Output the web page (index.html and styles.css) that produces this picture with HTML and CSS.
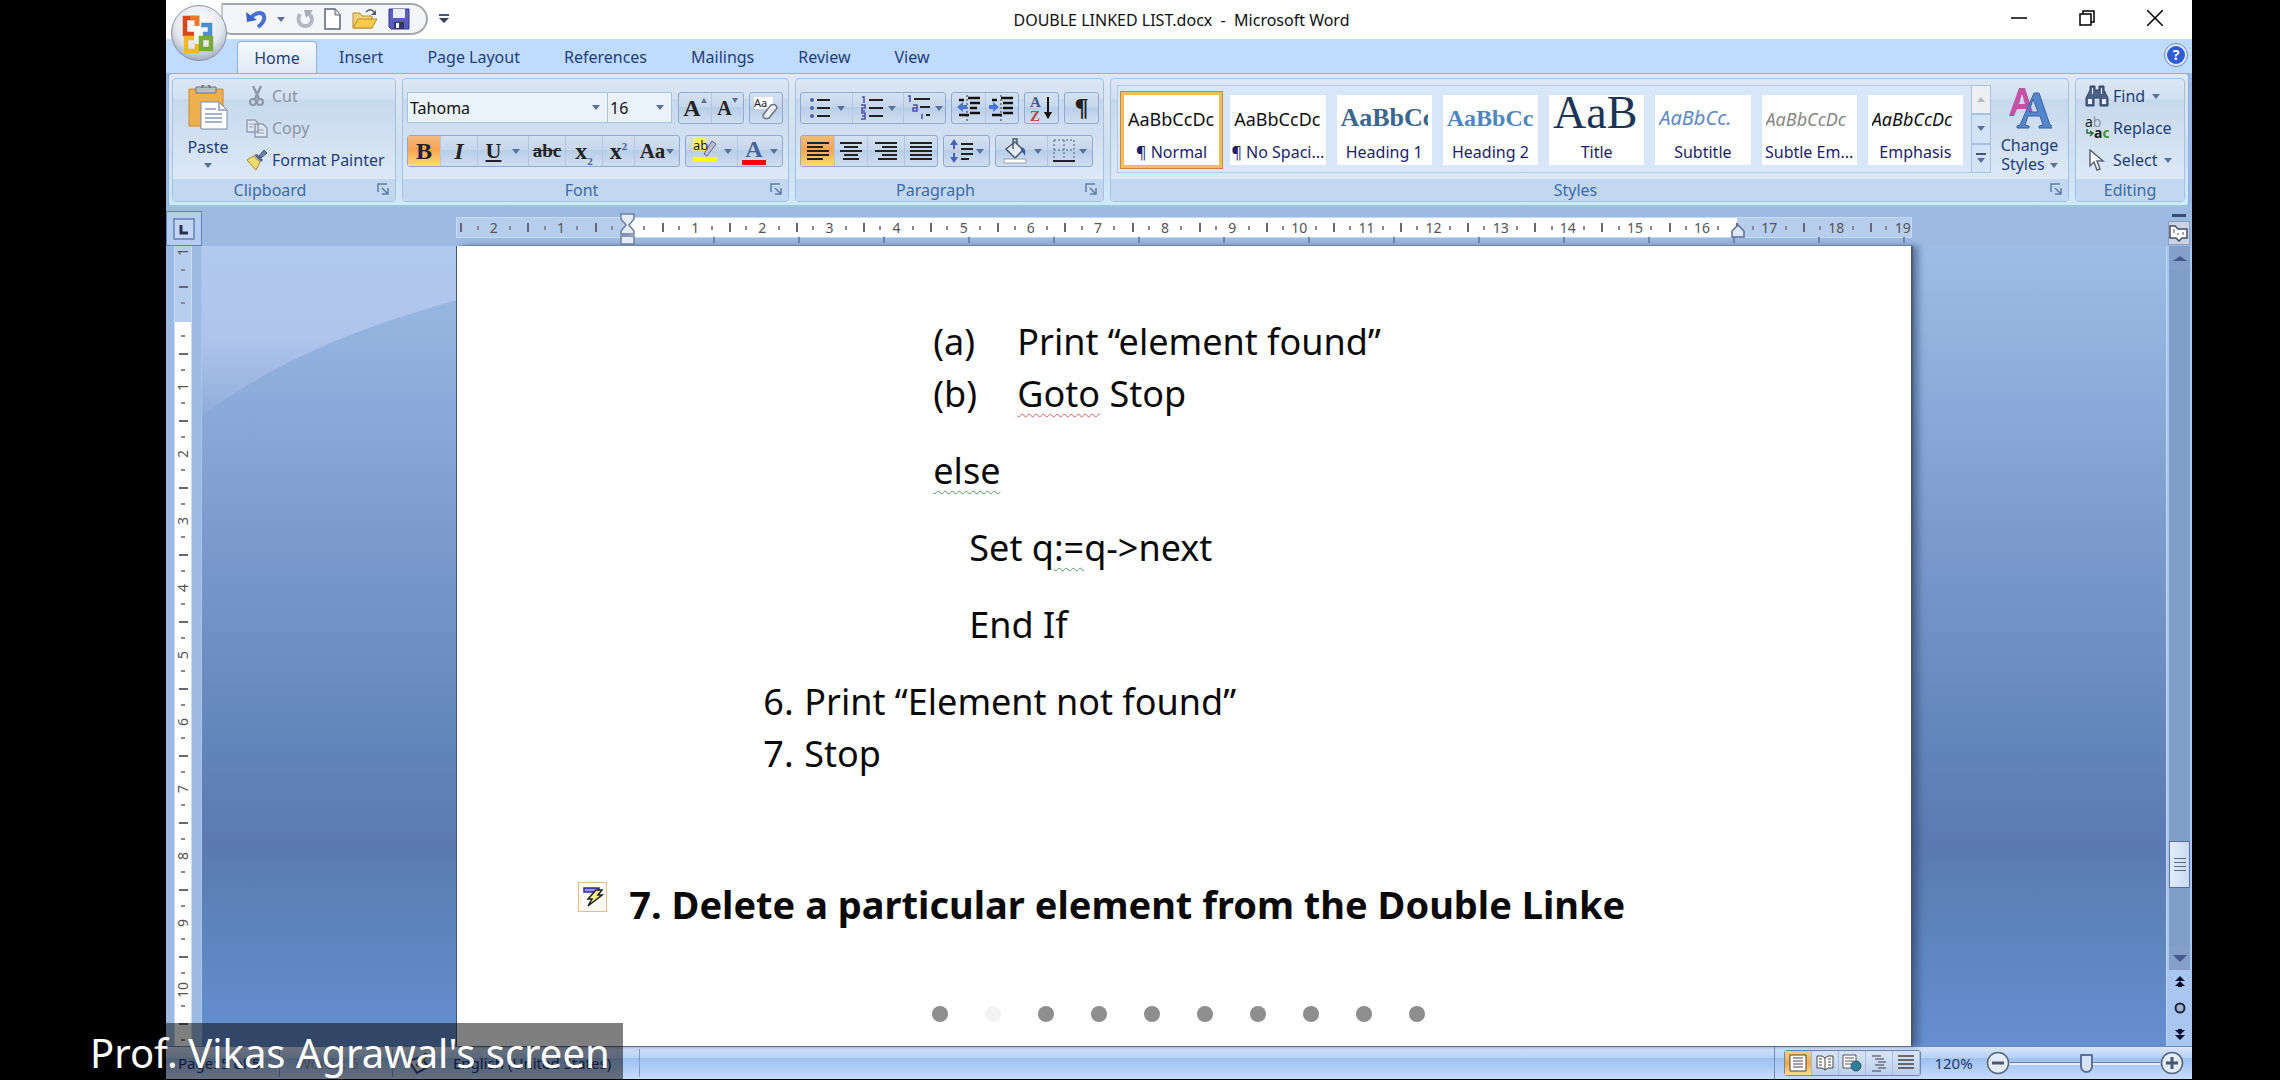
FILE: index.html
```html
<!DOCTYPE html>
<html lang="en">
<head>
<meta charset="utf-8">
<title>DOUBLE LINKED LIST.docx - Microsoft Word</title>
<link rel="stylesheet" href="styles.css">
</head>
<body>
<div class="app">

<header class="titlebar">
  <div class="quick">
    <button aria-label="Undo"><svg width="22" height="20" viewBox="0 0 22 20"><path d="M6 9C9 4 17 2 19 7c1 4-2 8-6 11" fill="none" stroke="#4a6fd0" stroke-width="4"/><path d="M1 3l1 10 10-2z" fill="#3a62c8"/></svg></button>
    <button aria-label="Undo history"><span class="caret"></span></button>
    <button aria-label="Repeat"><svg width="20" height="20" viewBox="0 0 20 20"><path d="M5 5c-3 5-1 12 5 12 7 0 9-8 4-12" fill="none" stroke="#b4b8c0" stroke-width="4"/><path d="M9 1h9l-7 8z" fill="#a9adb6"/></svg></button>
    <button aria-label="New"><svg width="18" height="22" viewBox="0 0 18 22"><path d="M1 1h10l5 6v14H1z" fill="#fff" stroke="#5a6478" stroke-width="1.5"/><path d="M11 1v6h5" fill="#dde3ee" stroke="#5a6478"/></svg></button>
    <button aria-label="Open"><svg width="26" height="22" viewBox="0 0 26 22"><path d="M1 20V5h7l2 3h10v12z" fill="#f4d27a" stroke="#b98a2c"/><path d="M1 20L6 11h19l-5 9z" fill="#fbc94c" stroke="#b98a2c"/><path d="M14 4c3-3 6-3 8 0" fill="none" stroke="#505a6a" stroke-width="1.5"/><path d="M24 2v5h-5z" fill="#505a6a"/></svg></button>
    <button aria-label="Save"><svg width="22" height="22" viewBox="0 0 22 22"><path d="M1 1h20v20H3l-2-2z" fill="#5a5cc0" stroke="#35378c"/><path d="M5 1h12v9H5z" fill="#e8edfa"/><path d="M6 14h10v7H6z" fill="#32366f"/><path d="M8 15h3v5H8z" fill="#fff"/></svg></button>
  </div>
  <button class="customize" aria-label="Customize Quick Access Toolbar"><span class="bar"></span><span class="caret"></span></button>
  <h1>DOUBLE LINKED LIST.docx&nbsp; - &nbsp;Microsoft Word</h1>
  <div class="window-buttons">
    <button aria-label="Minimize"><svg width="16" height="16" viewBox="0 0 16 16"><path d="M0 8h16" stroke="#000" stroke-width="1.5"/></svg></button>
    <button aria-label="Restore"><svg width="16" height="16" viewBox="0 0 16 16"><path d="M1 4h11v11H1zM4 4V1h11v11h-3" fill="none" stroke="#000" stroke-width="1.5"/></svg></button>
    <button aria-label="Close"><svg width="16" height="16" viewBox="0 0 16 16"><path d="M0 0l16 16M16 0L0 16" stroke="#000" stroke-width="1.5"/></svg></button>
  </div>
  <button class="office" aria-label="Office Button">
    <svg width="58" height="58" viewBox="0 0 58 58">
      <defs><radialGradient id="orb" cx=".5" cy=".35" r=".65"><stop offset="0" stop-color="#fff"/><stop offset=".65" stop-color="#e4e8ef"/><stop offset="1" stop-color="#a3adbd"/></radialGradient></defs>
      <circle cx="29" cy="29" r="27.5" fill="url(#orb)" stroke="#8b93a3"/>
      <g fill="none" stroke-width="4.5">
        <path d="M24 30h-9V14h12v8" stroke="#d8481c"/><path d="M20 14h7v8" stroke="#e8792a"/>
        <path d="M31 21h9v9h-7" stroke="#4b8fd0"/>
        <path d="M24 34h-8v13h11v-7" stroke="#f3b828"/>
        <path d="M31 34h10v11H31z" stroke="#7ba93a"/>
      </g>
    </svg>
  </button>
</header>

<nav class="tabs">
  <button class="tab active">Home</button><button class="tab insert">Insert</button><button class="tab">Page Layout</button><button class="tab">References</button><button class="tab">Mailings</button><button class="tab">Review</button><button class="tab">View</button>
  <button class="help" aria-label="Help">?</button>
</nav>

<div class="ribbon">
  <section class="group clipboard">
    <div class="body">
      <button class="big"><svg width="42" height="45" viewBox="0 0 42 45"><path d="M2 4h34v37H2z" fill="#eeb04e" stroke="#c98a2e"/><path d="M9 2h20v6H9z" fill="#b9bfc9" stroke="#6d7482"/><path d="M15 3a4 4 0 018 0" fill="none" stroke="#6d7482" stroke-width="2"/><path d="M14 17h18l8 8v19H14z" fill="#fff" stroke="#7c89a6"/><path d="M32 17v8h8M18 24h11M18 29h17M18 33h17M18 37h17" fill="none" stroke="#8b99bd" stroke-width="1.5"/></svg><span>Paste</span><span class="caret"></span></button>
      <div class="commands">
        <button class="off"><svg width="22" height="22" viewBox="0 0 22 22"><path d="M7 1l6 13M15 1L9 14" stroke="#8d97a8" stroke-width="2.5"/><circle cx="7" cy="17" r="3" fill="none" stroke="#8d97a8" stroke-width="2"/><circle cx="14" cy="17" r="3" fill="none" stroke="#8d97a8" stroke-width="2"/></svg>Cut</button>
        <button class="off"><svg width="22" height="20" viewBox="0 0 22 20"><path d="M1 2h8l3 3v9H1zM9 6h8l4 4v9H9z" fill="#dfe6f2" stroke="#929db2" stroke-width="1.5"/><path d="M11 12h7M11 15h7M3 6h5M3 9h4" stroke="#929db2"/></svg>Copy</button>
        <button><svg width="22" height="22" viewBox="0 0 22 22"><path d="M1 11l6-4 7 6-4 8z" fill="#f5dc6a" stroke="#a58a2e"/><path d="M8 6l7 7 2-2-6-6z" fill="#56657f"/><path d="M13 7l5-6 3 3-6 5z" fill="#6b82ac" stroke="#44557a"/></svg>Format Painter</button>
      </div>
    </div>
    <footer>Clipboard<button class="launch" aria-label="Clipboard options"><svg width="12" height="12" viewBox="0 0 12 12"><path d="M1 9V1h9M5 5l5 5M11 5v6H5" fill="none" stroke="#5f7da8" stroke-width="1.5"/></svg></button></footer>
  </section>

  <section class="group font">
    <div class="body rows">
      <div class="row">
        <label class="combo family"><select aria-label="Font"><option>Tahoma</option></select></label><label class="combo size"><select aria-label="Font size"><option>16</option></select></label>
        <div class="tb pad"><button class="serif b33" aria-label="Grow font"><b>A</b><i class="tri up"></i></button><button class="serif small b33" aria-label="Shrink font"><b>A</b><i class="tri"></i></button></div>
        <div class="tb"><button class="b33" aria-label="Clear formatting"><svg width="26" height="26" viewBox="0 0 26 26"><path d="M1 2h19v12H1z" fill="#fff"/><text x="1" y="12" class="icon-text" font-size="11">Aa</text><path d="M10 20l8-10q5-2 6 3l-8 10q-6 2-6-3z" fill="#eef2f8" stroke="#66738c" stroke-width="1.5"/></svg></button></div>
      </div>
      <div class="row">
        <div class="tb"><button class="on serif b33"><b>B</b></button><button class="serif b36"><b><i>I</i></b></button><button class="serif b52 under"><b><u>U</u></b><span class="caret"></span></button><button class="serif b36 strike"><s>abc</s></button><button class="serif b36"><b>x<sub>2</sub></b></button><button class="serif b33"><b>x<sup>2</sup></b></button><button class="serif b46 aa">Aa<span class="caret"></span></button></div>
        <div class="tb end"><button class="b52" aria-label="Highlight"><svg width="28" height="28" viewBox="0 0 28 28"><path d="M1 1h13v13H1z" fill="#f7f06a"/><text x="1" y="13" class="icon-text" font-size="13">ab</text><path d="M12 17l8-13 4 3-9 12z" fill="#b9c2d6" stroke="#6b5f74"/><path d="M1 20h24v5H1z" fill="#ff0"/></svg><span class="caret"></span></button><button class="b46 serif" aria-label="Font color"><span class="colour">A</span><span class="caret"></span></button></div>
      </div>
    </div>
    <footer>Font<button class="launch" aria-label="Font options"><svg width="12" height="12" viewBox="0 0 12 12"><path d="M1 9V1h9M5 5l5 5M11 5v6H5" fill="none" stroke="#5f7da8" stroke-width="1.5"/></svg></button></footer>
  </section>

  <section class="group paragraph">
    <div class="body rows">
      <div class="row">
        <div class="tb">
          <button class="b52" aria-label="Bullets"><svg width="24" height="24" viewBox="0 0 24 24"><path d="M8 4h13M8 12h13M8 20h13" stroke="#222" stroke-width="2"/><g fill="#4c62a8"><circle cx="3" cy="4" r="2"/><circle cx="3" cy="12" r="2"/><circle cx="3" cy="20" r="2"/></g></svg><span class="caret"></span></button>
          <button class="b52" aria-label="Numbering"><svg width="24" height="24" viewBox="0 0 24 24"><path d="M9 4h14M9 12h14M9 20h14" stroke="#222" stroke-width="2"/><path d="M2 1h2v6M1 9h4v3H2v3h3M1 17h4v6H1M2 20h3" fill="none" stroke="#4c4fa8" stroke-width="1.5"/></svg><span class="caret"></span></button>
          <button class="b42" aria-label="Multilevel list"><svg width="25" height="26" viewBox="0 0 25 26"><path d="M8 4h16M14 12h10M20 20h4" stroke="#222" stroke-width="2"/><path d="M2 1h2v6M7 10h4v6H7v-3h4M16 19v5" fill="none" stroke="#4c4fa8" stroke-width="1.5"/></svg><span class="caret"></span></button>
        </div>
        <div class="tb">
          <button class="b33" aria-label="Decrease indent"><svg width="26" height="26" viewBox="0 0 26 26"><path d="M12 3h12M14 8h10M14 13h7M14 18h10M3 20h10M3 5h5" stroke="#111" stroke-width="2.5"/><path d="M11 0v26" stroke="#333" stroke-dasharray="2 2"/><path d="M1 12l6-5v3h4v4H7v3z" fill="#4b74dc"/></svg></button>
          <button class="b33" aria-label="Increase indent"><svg width="26" height="26" viewBox="0 0 26 26"><path d="M12 3h12M14 8h10M14 13h10M14 18h10M3 20h10M3 5h5" stroke="#111" stroke-width="2.5"/><path d="M12 0v26" stroke="#333" stroke-dasharray="2 2"/><path d="M10 12L4 7v3H0v4h4v3z" fill="#4b74dc"/></svg></button>
        </div>
        <div class="tb"><button class="b33" aria-label="Sort"><svg width="26" height="28" viewBox="0 0 26 28"><text x="1" y="13" font-size="15" class="icon-serif" fill="#3d5a96">A</text><text x="1" y="27" font-size="15" class="icon-serif" fill="#b34a3c">Z</text><path d="M19 3v21" stroke="#111" stroke-width="2"/><path d="M15 18l4 7 4-7z" fill="#111"/></svg></button></div>
        <div class="tb"><button class="b33 pilcrow" aria-label="Show marks">¶</button></div>
      </div>
      <div class="row">
        <div class="tb">
          <button class="on b33" aria-label="Align left"><svg width="24" height="18" viewBox="0 0 24 18"><path d="M1 1h22M1 5h16M1 9h22M1 13h22M1 17h16" stroke="#222" stroke-width="2"/></svg></button>
          <button class="b33" aria-label="Center"><svg width="24" height="18" viewBox="0 0 24 18"><path d="M1 1h22M5 5h14M1 9h22M5 13h14M4 17h16" stroke="#222" stroke-width="2"/></svg></button>
          <button class="b36" aria-label="Align right"><svg width="24" height="18" viewBox="0 0 24 18"><path d="M1 1h22M8 5h15M1 9h22M8 13h15M4 17h19" stroke="#222" stroke-width="2"/></svg></button>
          <button class="b33" aria-label="Justify"><svg width="24" height="18" viewBox="0 0 24 18"><path d="M1 1h22M1 5h22M1 9h22M1 13h22M1 17h22" stroke="#222" stroke-width="2"/></svg></button>
        </div>
        <div class="tb"><button class="b46 tight" aria-label="Line spacing"><svg width="24" height="24" viewBox="0 0 24 24"><path d="M11 5h12M11 10h12M11 15h12M11 20h8" stroke="#222" stroke-width="2"/><path d="M4 0L0 6h3v4h2V6h3zM4 24l4-6H5v-4H3v4H0z" fill="#4a5fb5"/></svg><span class="caret"></span></button></div>
        <div class="tb">
          <button class="b52" aria-label="Shading"><svg width="28" height="26" viewBox="0 0 28 26"><path d="M4 11L13 4l8 8-8 8z" fill="#e7ecf5" stroke="#4b566b" stroke-width="1.5"/><path d="M11 11V1h4v5" fill="none" stroke="#4b566b" stroke-width="1.5"/><path d="M19 9q6 1 4 9q-3-5-4-4z" fill="#3b5fa5"/><path d="M2 21h22v4H2z" fill="#fff" stroke="#9a9fa8"/></svg><span class="caret"></span></button>
          <button class="b46" aria-label="Borders"><svg width="22" height="24" viewBox="0 0 22 24"><path d="M1 1h20M1 11h20M1 1v20M11 1v20M21 1v20" stroke="#7b879c" stroke-dasharray="2 2" stroke-width="1.5"/><path d="M0 22h22" stroke="#222" stroke-width="2"/></svg><span class="caret"></span></button>
        </div>
      </div>
    </div>
    <footer>Paragraph<button class="launch" aria-label="Paragraph options"><svg width="12" height="12" viewBox="0 0 12 12"><path d="M1 9V1h9M5 5l5 5M11 5v6H5" fill="none" stroke="#5f7da8" stroke-width="1.5"/></svg></button></footer>
  </section>

  <section class="group styles">
    <div class="body">
      <div class="gallery">
        <button class="picked"><span class="sample">AaBbCcDc</span><span>¶ Normal</span></button>
        <button><span class="sample">AaBbCcDc</span><span>¶ No Spaci...</span></button>
        <button><span class="sample h-one">AaBbCc</span><span>Heading 1</span></button>
        <button><span class="sample h-two">AaBbCc</span><span>Heading 2</span></button>
        <button><span class="sample h-title">AaB</span><span>Title</span></button>
        <button><span class="sample h-sub">AaBbCc.</span><span>Subtitle</span></button>
        <button><span class="sample h-subtle">AaBbCcDc</span><span>Subtle Em...</span></button>
        <button><span class="sample h-emph">AaBbCcDc</span><span>Emphasis</span></button>
      </div>
      <div class="spin"><button class="dim" aria-label="Row up"><i class="tri up"></i></button><button aria-label="Row down"><i class="tri"></i></button><button aria-label="More styles"><span class="bar"></span><i class="tri"></i></button></div>
      <button class="big change"><svg width="44" height="44" viewBox="0 0 44 44"><path d="M1 30L11 2h6l9 28h-6l-2-7H9l-3 7zM11 18h6l-3-10z" fill="#c252a4"/><path d="M9 42v-2l3-1L26 7h5l11 32 3 1v2H31v-2l4-1-3-9H20l-3 9 4 1v2zM21 26h9l-5-13z" fill="#5585cb" stroke="#3c64a4"/></svg><span>Change</span><span>Styles <span class="caret"></span></span></button>
    </div>
    <footer>Styles<button class="launch" aria-label="Styles options"><svg width="12" height="12" viewBox="0 0 12 12"><path d="M1 9V1h9M5 5l5 5M11 5v6H5" fill="none" stroke="#5f7da8" stroke-width="1.5"/></svg></button></footer>
  </section>

  <section class="group editing">
    <div class="body">
      <div class="commands">
        <button><svg width="24" height="22" viewBox="0 0 24 22"><path d="M5 1h5v4h4V1h5v4l4 8v8h-8v-8h-6v8H1v-8l4-8z" fill="#4d6186" stroke="#2f4063"/><path d="M3 14h4v5H3zM17 14h4v5h-4zM7 3h1v6H7zM16 3h1v6h-1z" fill="#e4ecf8"/></svg>Find <span class="caret"></span></button>
        <button><svg width="24" height="24" viewBox="0 0 24 24"><text x="0" y="11" font-size="14" class="icon-text">a<tspan fill="#8b94a5">b</tspan></text><text x="9" y="22" font-size="14" class="icon-text" font-weight="bold">a<tspan fill="#3f9a2e">c</tspan></text><path d="M2 13v4h5M5 15l3 2-3 3" fill="none" stroke="#2d6b3c" stroke-width="1.5"/></svg>Replace</button>
        <button><svg width="24" height="22" viewBox="0 0 24 22"><path d="M5 1v16l4-4 3 8 3-1-3-8h6z" fill="#fff" stroke="#5a6478" stroke-width="1.5"/></svg>Select <span class="caret"></span></button>
      </div>
    </div>
    <footer>Editing</footer>
  </section>
</div>

<div class="workspace">
  <div class="corner"><button aria-label="Left tab"><svg width="22" height="22" viewBox="0 0 22 22"><path d="M1 1h20v20H1z" fill="#c3d6f5" stroke="#6880b0" stroke-width="1.5"/><path d="M8 7v8h7" fill="none" stroke="#26344f" stroke-width="3"/></svg></button></div>
  <div class="ruler-row">
    <div class="ruler">
      <span class="cm"><b>2</b></span><span class="cm"><b>1</b></span><span class="cm zero"><svg width="16" height="32" viewBox="0 0 16 32"><path d="M1 1h13v5L9 12l5 6v3H1v-3l5-6-5-6zM1 23h13v8H1z" fill="#e4ecf8" stroke="#6d7f9f" stroke-width="1.5"/></svg></span><span class="cm"><b>1</b></span><span class="cm"><b>2</b></span><span class="cm"><b>3</b></span><span class="cm"><b>4</b></span><span class="cm"><b>5</b></span><span class="cm"><b>6</b></span><span class="cm"><b>7</b></span><span class="cm"><b>8</b></span><span class="cm"><b>9</b></span><span class="cm"><b>10</b></span><span class="cm"><b>11</b></span><span class="cm"><b>12</b></span><span class="cm"><b>13</b></span><span class="cm"><b>14</b></span><span class="cm"><b>15</b></span><span class="cm"><b>16</b></span><span class="cm right"><b>17</b><svg width="16" height="14" viewBox="0 0 16 14"><path d="M8 1l6 6v6H2V7z" fill="#dbe6f6" stroke="#5b6f93" stroke-width="1.5"/></svg></span><span class="cm"><b>18</b></span><span class="cm last"><b>19</b></span>
    </div>
    <div class="stops"></div>
  </div>
  <div class="ruler-toggle"><i></i><button aria-label="View ruler"><svg width="20" height="18" viewBox="0 0 20 18"><path d="M1 2h5l3 3h9v9h-5l-3 3-3-3H1z" fill="#fff" stroke="#444f66" stroke-width="1.5"/><path d="M5 5v4M9 9v2M14 8v3" stroke="#444f66"/></svg></button></div>

  <div class="vside"><div class="vruler"><span class="vcm first"><b>1</b></span><span class="vcm"></span><span class="vcm"><b>1</b></span><span class="vcm"><b>2</b></span><span class="vcm"><b>3</b></span><span class="vcm"><b>4</b></span><span class="vcm"><b>5</b></span><span class="vcm"><b>6</b></span><span class="vcm"><b>7</b></span><span class="vcm"><b>8</b></span><span class="vcm"><b>9</b></span><span class="vcm"><b>10</b></span><span class="vcm"></span></div></div>

  <main class="canvas">
    <svg class="sheen" viewBox="0 0 256 190" preserveAspectRatio="none"><defs><linearGradient id="sheen" x1="0" y1="0" x2="0" y2="1"><stop offset="0" stop-color="#b2c9ee"/><stop offset=".55" stop-color="#afc4eb"/><stop offset="1" stop-color="#8eaddb"/></linearGradient></defs><path d="M0 0h256v54C170 78 80 110 0 170z" fill="url(#sheen)"/></svg>
    <article class="page">
      <ol class="inner"><li><span class="mark">(a)</span>Print “element found”</li><li><span class="mark">(b)</span><span class="spell">Goto</span> Stop</li></ol>
      <p class="else"><span class="grammar">else</span></p>
      <p class="deep">Set q<span class="grammar">:=</span>q-&gt;next</p>
      <p class="deep">End If</p>
      <ol class="outer"><li><span class="mark">6.</span>Print “Element not found”</li><li><span class="mark">7.</span>Stop</li></ol>
      <h2><button class="autocorrect" aria-label="AutoCorrect options"><svg width="22" height="22" viewBox="0 0 22 22"><path d="M2 2h15v4H2z" fill="#9b93f0" stroke="#2a2a9c" stroke-width="1.5"/><path d="M14 4h6l-4 5h4L6 20l4-7H6z" fill="#f6ef8a" stroke="#222" stroke-width="1.5"/></svg></button>7. Delete a particular element from the Double Linke</h2>
    </article>
  </main>

  <div class="scroll">
    <button aria-label="Scroll up"><i class="arrow up"></i></button>
    <div class="track"><span class="thumb"><i></i></span></div>
    <button aria-label="Scroll down"><i class="arrow"></i></button>
    <div class="browse">
      <button aria-label="Previous page"><svg width="10" height="12" viewBox="0 0 10 12"><path d="M5 0l5 5H0zM5 5l5 5H7v1H3v-1H0z" fill="#0a1030"/></svg></button>
      <button aria-label="Browse object"><svg width="12" height="12" viewBox="0 0 12 12"><circle cx="6" cy="6" r="4.5" fill="#a7b3cb" stroke="#1a2440" stroke-width="2"/></svg></button>
      <button aria-label="Next page"><svg width="10" height="12" viewBox="0 0 10 12"><path d="M5 12L0 7h10zM5 7L0 2h3V1h4v1h3z" fill="#0a1030"/></svg></button>
    </div>
  </div>
</div>

<footer class="status">
  <span class="cell pages">Page: 5 of 5</span><span class="cell words">Words: 6</span><span class="cell lang"><svg width="24" height="24" viewBox="0 0 24 24"><path d="M2 10l12-4 7 10-11 6z" fill="#dfe5f2" stroke="#334a8c" stroke-width="2"/><path d="M9 14L18 2l3 2-9 12z" fill="#e5c98a" stroke="#5c4a2a"/></svg>English (United States)</span>
  <span class="space"></span>
  <div class="views">
    <button class="on" aria-label="Print layout"><svg width="18" height="18" viewBox="0 0 18 18"><path d="M1 1h16v16H1z" fill="#fff" stroke="#444"/><path d="M4 4h10M4 7h10M4 10h10M4 13h10" stroke="#444"/></svg></button>
    <button aria-label="Full screen reading"><svg width="18" height="18" viewBox="0 0 18 18"><path d="M1 2h5l3 2 3-2h5v12h-5l-3 2-3-2H1zM9 4v12" fill="#fff" stroke="#444"/><path d="M3 5h3M3 8h3M3 11h3M12 5h3M12 8h3M12 11h3" stroke="#444"/></svg></button>
    <button aria-label="Web layout"><svg width="20" height="18" viewBox="0 0 20 18"><path d="M1 1h13v13H1z" fill="#fff" stroke="#555"/><path d="M3 4h9M3 7h9M3 10h6" stroke="#555"/><circle cx="14" cy="12" r="5" fill="#2f7f96" stroke="#24567c"/></svg></button>
    <button aria-label="Outline"><svg width="18" height="18" viewBox="0 0 18 18"><path d="M2 2h9M5 5h9M8 8h8M5 11h9M8 14h8M2 17h9" stroke="#6b7382" stroke-width="1.5" /></svg></button>
    <button aria-label="Draft"><svg width="18" height="18" viewBox="0 0 18 18"><path d="M1 2h16M1 6h16M1 10h16M1 14h16" stroke="#444" stroke-width="1.5"/></svg></button>
  </div>
  <span class="percent">120%</span>
  <button class="round" aria-label="Zoom out"><svg width="24" height="24" viewBox="0 0 24 24"><circle cx="12" cy="12" r="10.5" fill="#e4ecf8" stroke="#55657f" stroke-width="1.5"/><path d="M6 12h12" stroke="#4a576f" stroke-width="3"/></svg></button>
  <input class="zoom" type="range" min="0" max="100" value="51" aria-label="Zoom">
  <button class="round" aria-label="Zoom in"><svg width="24" height="24" viewBox="0 0 24 24"><circle cx="12" cy="12" r="10.5" fill="#e4ecf8" stroke="#55657f" stroke-width="1.5"/><path d="M6 12h12M12 6v12" stroke="#4a576f" stroke-width="3"/></svg></button>
</footer>
<div class="shade"></div>
</div>

<div class="presenter">Prof. Vikas Agrawal's screen</div>
<nav class="dots"><button aria-label="View 1"></button><button class="current" aria-label="View 2"></button><button aria-label="View 3"></button><button aria-label="View 4"></button><button aria-label="View 5"></button><button aria-label="View 6"></button><button aria-label="View 7"></button><button aria-label="View 8"></button><button aria-label="View 9"></button><button aria-label="View 10"></button></nav>
</body>
</html>
```
FILE: styles.css
```css
* { box-sizing: border-box; }
body {
  margin: 0;
  min-height: 100vh;
  padding: 0 88px 1px 166px;
  display: flex;
  position: relative;
  overflow: hidden;
  background: #000;
  color: #1d3f7c;
  font: 16px/20px "Noto Sans", sans-serif;
}
button {
  margin: 0; padding: 0; border: 0; background: none; color: inherit; font: inherit;
  display: flex; align-items: center; justify-content: center;
}
svg { display: block; flex: none; }
h1, h2, p, ol { margin: 0; padding: 0; font-weight: normal; }
.app { flex: 1; min-width: 0; display: flex; flex-direction: column; position: relative; background: #9dbae3; }
.caret, .tri { display: inline-block; flex: none; border: 4px solid transparent; border-top: 5px solid #5a719c; border-bottom: 0; }
.tri.up { border-top: 0; border-bottom: 5px solid #5a719c; }
.bar { width: 10px; height: 2px; background: #44567c; }

/* title bar */
.titlebar { height: 39px; background: #fefefe; display: flex; align-items: flex-start; position: relative; }
.quick {
  width: 207px; height: 32px; margin: 3px 0 0 55px; padding: 0 16px 0 22px;
  display: flex; align-items: center; justify-content: space-between;
  background: #f3f5f9; border: 2px solid #a3a5ab; border-radius: 0 17px 17px 0 / 0 16px 16px 0;
  border-left-color: #c3c6cc; border-bottom-left-radius: 10px;
}
.customize { width: 32px; height: 37px; flex-direction: column; gap: 2px; }
.customize .caret { border-width: 5px 5px 0; border-top-color: #39415a; }
h1 { flex: 1; padding-right: 82px; text-align: center; color: #111; font-size: 16px; line-height: 40px; }
.window-buttons { display: flex; padding-right: 3px; }
.window-buttons button { width: 68px; height: 36px; }
.office { position: absolute; left: 4px; top: 4px; z-index: 2; }

/* tabs */
.tabs { height: 34px; padding: 2px 5px 0 71px; display: flex; background: #bfdbff; }
.tab { height: 32px; padding: 0 22px; font-size: 16px; }
.tab.active { width: 80px; padding: 0; background: linear-gradient(#f4f9ff, #dfe9f5); border: 1px solid #8fb0de; border-bottom: 0; border-radius: 4px 4px 0 0; }
.help { width: 22px; height: 22px; margin: 3px 0 0 auto; border-radius: 50%; border: 2px solid #dfeaff; outline: 1px solid #7088b8; background: #2f5bd0; color: #fff; font-weight: bold; font-size: 14px; }

/* ribbon */
.ribbon {
  height: 134px; margin: 0 3px 0 2px; padding: 4px 3px 3px; display: flex; gap: 6px;
  background: linear-gradient(#dfe8f3, #cfdff2 60%, #cdeaf8); border: 1px solid #8db2e3; border-bottom: 2px solid #9cc5d8; border-radius: 4px;
}
.group { display: flex; flex-direction: column; border: 1px solid #a8c0de; border-radius: 4px; background: linear-gradient(#dde7f4, #d2e0f2 16%, #c7d8ed 17%, #dce8f6 80%); overflow: hidden; }
.group .body { flex: 1; min-height: 0; display: flex; }
.group footer { height: 22px; line-height: 22px; text-align: center; background: #c1d8f0; color: #3e6aaa; font-size: 16px; position: relative; }
.launch { position: absolute; right: 6px; top: 4px; }
.clipboard { width: 224px; }
.font { width: 387px; }
.paragraph { width: 309px; }
.styles { flex: 1; min-width: 0; }
.editing { width: 110px; }
.clipboard footer, .font footer, .paragraph footer, .styles footer { padding-right: 28px; }

.big { flex-direction: column; justify-content: flex-start; width: 54px; margin: 6px 0 0 8px; }
.big svg { margin-bottom: 7px; }
.big .caret { margin-top: 6px; }
.commands { padding: 1px 0 0 11px; }
.commands button { height: 32px; gap: 4px; font-size: 16px; }
.commands .off { color: #8a94a5; }
.commands .caret { margin-left: 3px; }
.editing .commands { padding-left: 9px; }

.group .rows { flex-direction: column; gap: 11px; padding: 13px 4px 0; }
.row { display: flex; gap: 5px; }
.tb { height: 32px; display: flex; border: 1px solid #8ea9d2; border-radius: 3px; background: linear-gradient(#d5e1f2, #c6d6ec 45%, #b9cde8 46%, #cfdef1); color: #222; }
.tb button { height: 30px; gap: 4px; border-left: 1px solid #b3c6e2; }
.tb button:first-child { border-left: 0; }
.tb .on { background: linear-gradient(#f4b981, #f5a552 45%, #fddc73); }
.b33 { width: 33px; } .b36 { width: 37px; } .b42 { width: 42px; } .b46 { width: 45px; } .b52 { width: 51px; }
.font .b33 { width: 32px; }
.serif { font-family: "Liberation Serif", serif; font-size: 24px; }
.serif.small { font-size: 20px; }
.serif .tri { align-self: flex-start; margin: 5px 0 0 -4px; border-left-width: 3px; border-right-width: 3px; }
.serif.under { font-size: 22px; gap: 11px; }
.serif.strike { font-size: 19px; font-weight: bold; }
.serif sub, .serif sup { font-size: 11px; line-height: 0; color: #3c5fae; }
.serif.aa { font-size: 21px; font-weight: bold; gap: 1px; }
.pad { margin-left: 1px; }
.combo { height: 31px; position: relative; background: #eaf2fb; border: 1px solid #abc1de; }
.combo::after { content: ""; position: absolute; right: 7px; top: 12px; border: 4px solid transparent; border-top: 5px solid #5a719c; border-bottom: 0; }
.combo select { width: 100%; height: 100%; padding: 0 2px; border: 0; background: none; appearance: none; font: 16px/20px "Noto Sans", sans-serif; color: #111; }
.family { width: 201px; }
.size { width: 65px; margin-left: -6px; }
.colour { height: 27px; line-height: 22px; border-bottom: 5px solid #f00; padding: 0 3px; color: #44639c; font-weight: bold; }
.icon-text { font-family: "Noto Sans", sans-serif; fill: #222; }
.icon-serif { font-family: "Liberation Serif", serif; font-weight: bold; }
.tb .pilcrow { font: bold 26px/28px "Liberation Serif", serif; }
.paragraph .tight { gap: 2px; }

.gallery { flex: 1; min-width: 0; height: 88px; margin: 6px 0 0 6px; padding: 9px 8px 7px 6px; display: grid; grid-template-columns: repeat(8, minmax(0, 1fr)); gap: 11px; background: #d7e6f8; border: 1px solid #b6cae6; border-right: 0; }
.gallery button { flex-direction: column; justify-content: flex-start; background: #fefefe; color: #1d1e66; font-size: 16px; white-space: nowrap; overflow: hidden; }
.gallery .picked { box-shadow: 0 0 0 4px #f3bc5c; outline: 1px solid #c58a3c; outline-offset: 3px; }
.sample { align-self: stretch; height: 47px; line-height: 48px; margin: 0 4px; overflow: hidden; flex: none; text-align: left; color: #111; font-size: 18px; }
.h-one, .h-two { font: bold 26px/46px "Liberation Serif", serif; color: #3a6690; }
.h-two { color: #4f87bd; font-size: 24px; }
.h-title { font: 46px/36px "Liberation Serif", serif; color: #1c3557; }
.h-sub { font: italic 20px/46px "Noto Sans", sans-serif; color: #5d8ac2; }
.h-subtle { font-style: italic; color: #888; }
.h-emph { font-style: italic; }
.spin { width: 20px; height: 88px; margin-top: 6px; display: grid; grid-template-rows: 1fr 1fr 1fr; }
.spin button { flex-direction: column; gap: 3px; border: 1px solid #aac1e0; background: #d3e3f7; }
.spin .dim { background: #eceef2; }
.spin .dim .tri { border-bottom-color: #b3b9c4; }
.big.change { width: 77px; margin: 7px 0 0; }
.change svg { margin-bottom: 6px; }
.change span { line-height: 19px; }
.change .caret { margin: 0 0 2px 1px; }

/* document area */
.workspace { flex: 1; display: grid; grid-template-columns: 36px minmax(0, 1fr) 26px; grid-template-rows: 39px minmax(0, 1fr); }
.corner { padding: 4px 0 0; }
.corner button { width: 100%; height: 35px; border: 1px solid #5e83c4; background: #b5cdf2; }
.ruler-row { display: flex; flex-direction: column; align-items: center; padding-top: 11px; }
.ruler { width: 74%; height: 19px; display: flex; background: linear-gradient(90deg, #b7cdee 11.8%, #fff 11.8% 88%, #b7cdee 88%); outline: 1px solid #c6daf5; color: #555; padding-left: 3px; }
.cm { flex: 1000 1 0; min-width: 0; position: relative; display: flex; align-items: center; justify-content: center;
  background: linear-gradient(#667, #667) 0 50% / 2px 9px no-repeat, linear-gradient(#889, #889) 25% 50% / 2px 4px no-repeat, linear-gradient(#889, #889) 75% 50% / 2px 4px no-repeat; }
.cm b, .vcm b { font-weight: normal; font-size: 14px; line-height: 18px; }
.cm svg { position: absolute; top: -5px; z-index: 1; }
.cm.right svg { top: 6px; left: -6px; }
.cm.last { flex-grow: 607; justify-content: flex-end; background: linear-gradient(#667, #667) 0 50% / 2px 9px no-repeat, linear-gradient(#889, #889) 40% 50% / 2px 4px no-repeat; }
.stops { width: 74%; height: 6px; padding-left: 256px; background: repeating-linear-gradient(90deg, #6f86ae 0 2px, transparent 2px 85px) content-box; }
.ruler-toggle { display: flex; flex-direction: column; align-items: center; padding-top: 7px; gap: 4px; }
.ruler-toggle i { width: 14px; height: 3px; background: #3a4c74; }
.ruler-toggle button { width: 22px; height: 24px; background: #cbd3e3; border: 1px solid #8f9dba; }
.vside { padding: 0 9px 0 8px; contain: size; overflow: hidden; border-right: 1px solid #a9c4ea; }
.vruler { background: linear-gradient(#b7cdee 76px, #fff 76px); border: solid #cbdcf6; border-width: 0 1px; color: #555; }
.vcm { height: 67px; display: flex; align-items: center; justify-content: center;
  background: linear-gradient(#667, #667) 50% 0 / 9px 2px no-repeat, linear-gradient(#889, #889) 50% 25% / 4px 2px no-repeat, linear-gradient(#889, #889) 50% 75% / 4px 2px no-repeat; }
.vcm b { transform: rotate(-90deg); }
.vcm.first { height: 40px; align-items: flex-start; background: linear-gradient(#889, #889) 50% 60% / 4px 2px no-repeat; }
.vcm.first b { line-height: 12px; }
.canvas { position: relative; display: flex; justify-content: center; background: linear-gradient(#9dbde6, #8aabd9 20%, #7c9ccd 35%, #6285bb 62%, #5a7ab1 75%, #5f86c0 88%, #668fd0); }
.sheen { position: absolute; left: 0; top: 0; width: 13%; height: 190px; }
.page { width: 74%; position: relative; background: #fefefe; color: #0a0a0a; font-size: 36px; line-height: 52px; padding-top: 70px; box-shadow: -1px 0 0 #44546c, 2px 0 2px #44546c, 8px 0 6px rgba(50, 70, 110, .5); }
.page li { list-style: none; display: flex; white-space: pre; }
.inner { padding-left: 476px; }
.inner .mark { width: 84px; }
.else { padding-left: 476px; margin-top: 25px; }
.deep { padding-left: 512px; margin-top: 25px; }
.outer { padding-left: 306px; margin-top: 25px; }
.outer .mark { width: 41px; }
.spell, .grammar { text-decoration: underline wavy #e05a5a 1px; text-underline-offset: 6px; text-decoration-skip-ink: none; }
.grammar { text-decoration-color: #4a9a5a; }
.page h2 { padding-left: 172px; margin-top: 98px; font-size: 38px; font-weight: bold; white-space: nowrap; position: relative; }
.autocorrect { position: absolute; left: 121px; top: 4px; width: 29px; height: 30px; border: 1px solid #e8b98a; background: #fffdf5; }
.scroll { display: flex; flex-direction: column; align-items: stretch; padding: 0 2px; background: #a9c6f2; border-left: 1px solid #c4d8f5; }
.scroll button { height: 24px; }
.arrow { border: 7px solid transparent; border-top: 7px solid #435a8c; border-bottom: 0; }
.arrow.up { border-top: 0; border-bottom: 5px solid #435a8c; }
.track { flex: 1; display: flex; flex-direction: column; padding-top: 571px; background: #7f9fcb; }
.scroll > button { background: #859fca; }
.thumb { height: 47px; border: 1px solid #5a6f97; background: linear-gradient(90deg, #e4ecfa, #c9d8f0); display: flex; align-items: center; justify-content: center; }
.thumb i { width: 12px; height: 13px; background: repeating-linear-gradient(#5d6b88 0 1px, transparent 1px 4px); }
.browse { height: 76px; display: flex; flex-direction: column; justify-content: space-between; }

/* status bar */
.status { height: 33px; display: flex; align-items: center; border-top: 1px solid #6c8cbc; background: linear-gradient(#d8e6fb, #b6d0f7 35%, #9fc0f0 36%, #c7dcfb); color: #1c3672; font-size: 15px; }
.cell { height: 28px; display: flex; align-items: center; border-right: 1px solid #7d9ccc; white-space: nowrap; }
.pages { width: 114px; padding-left: 12px; }
.words { width: 113px; padding-left: 17px; color: #8a97b5; }
.lang { width: 247px; padding-left: 14px; gap: 22px; }
.space { flex: 1; height: 100%; border-right: 1px solid #6c8cbc; margin-right: 9px; }
.views { display: flex; height: 26px; border: 1px solid #6c87b7; border-radius: 3px; background: linear-gradient(#d9e5f6, #bccfec); }
.views button { width: 27px; border-right: 1px solid #a8bcdc; }
.views .on { background: linear-gradient(#f8cf82, #f4a94a 50%, #fde08a); }
.percent { width: 65px; text-align: center; }
.zoom { appearance: none; width: 150px; height: 22px; margin: 0; background: linear-gradient(#5f7dae, #5f7dae) 0 10px / 100% 1px no-repeat, linear-gradient(#e9f1fd, #e9f1fd) 0 11px / 100% 2px no-repeat; }
.zoom::-webkit-slider-thumb { appearance: none; width: 13px; height: 19px; background: #d6e2f5; border: 2px solid #5c6f94; border-radius: 1px 1px 7px 7px; }
.status .round:last-child { margin-right: 8px; }

/* sharing overlay */
.shade { position: absolute; left: 0; bottom: 0; width: 457px; height: 56px; background: rgba(0, 0, 0, .5); }
.presenter { position: absolute; left: 90px; bottom: 0; color: #fff; font-size: 40px; line-height: 54px; white-space: nowrap; }
.dots { position: absolute; left: 0; right: 0; bottom: 58px; padding-left: 77px; display: flex; justify-content: center; gap: 37px; }
.dots button { width: 16px; height: 16px; border-radius: 50%; background: #8e8e8e; }
.dots .current { background: #f3f3f3; }
```
